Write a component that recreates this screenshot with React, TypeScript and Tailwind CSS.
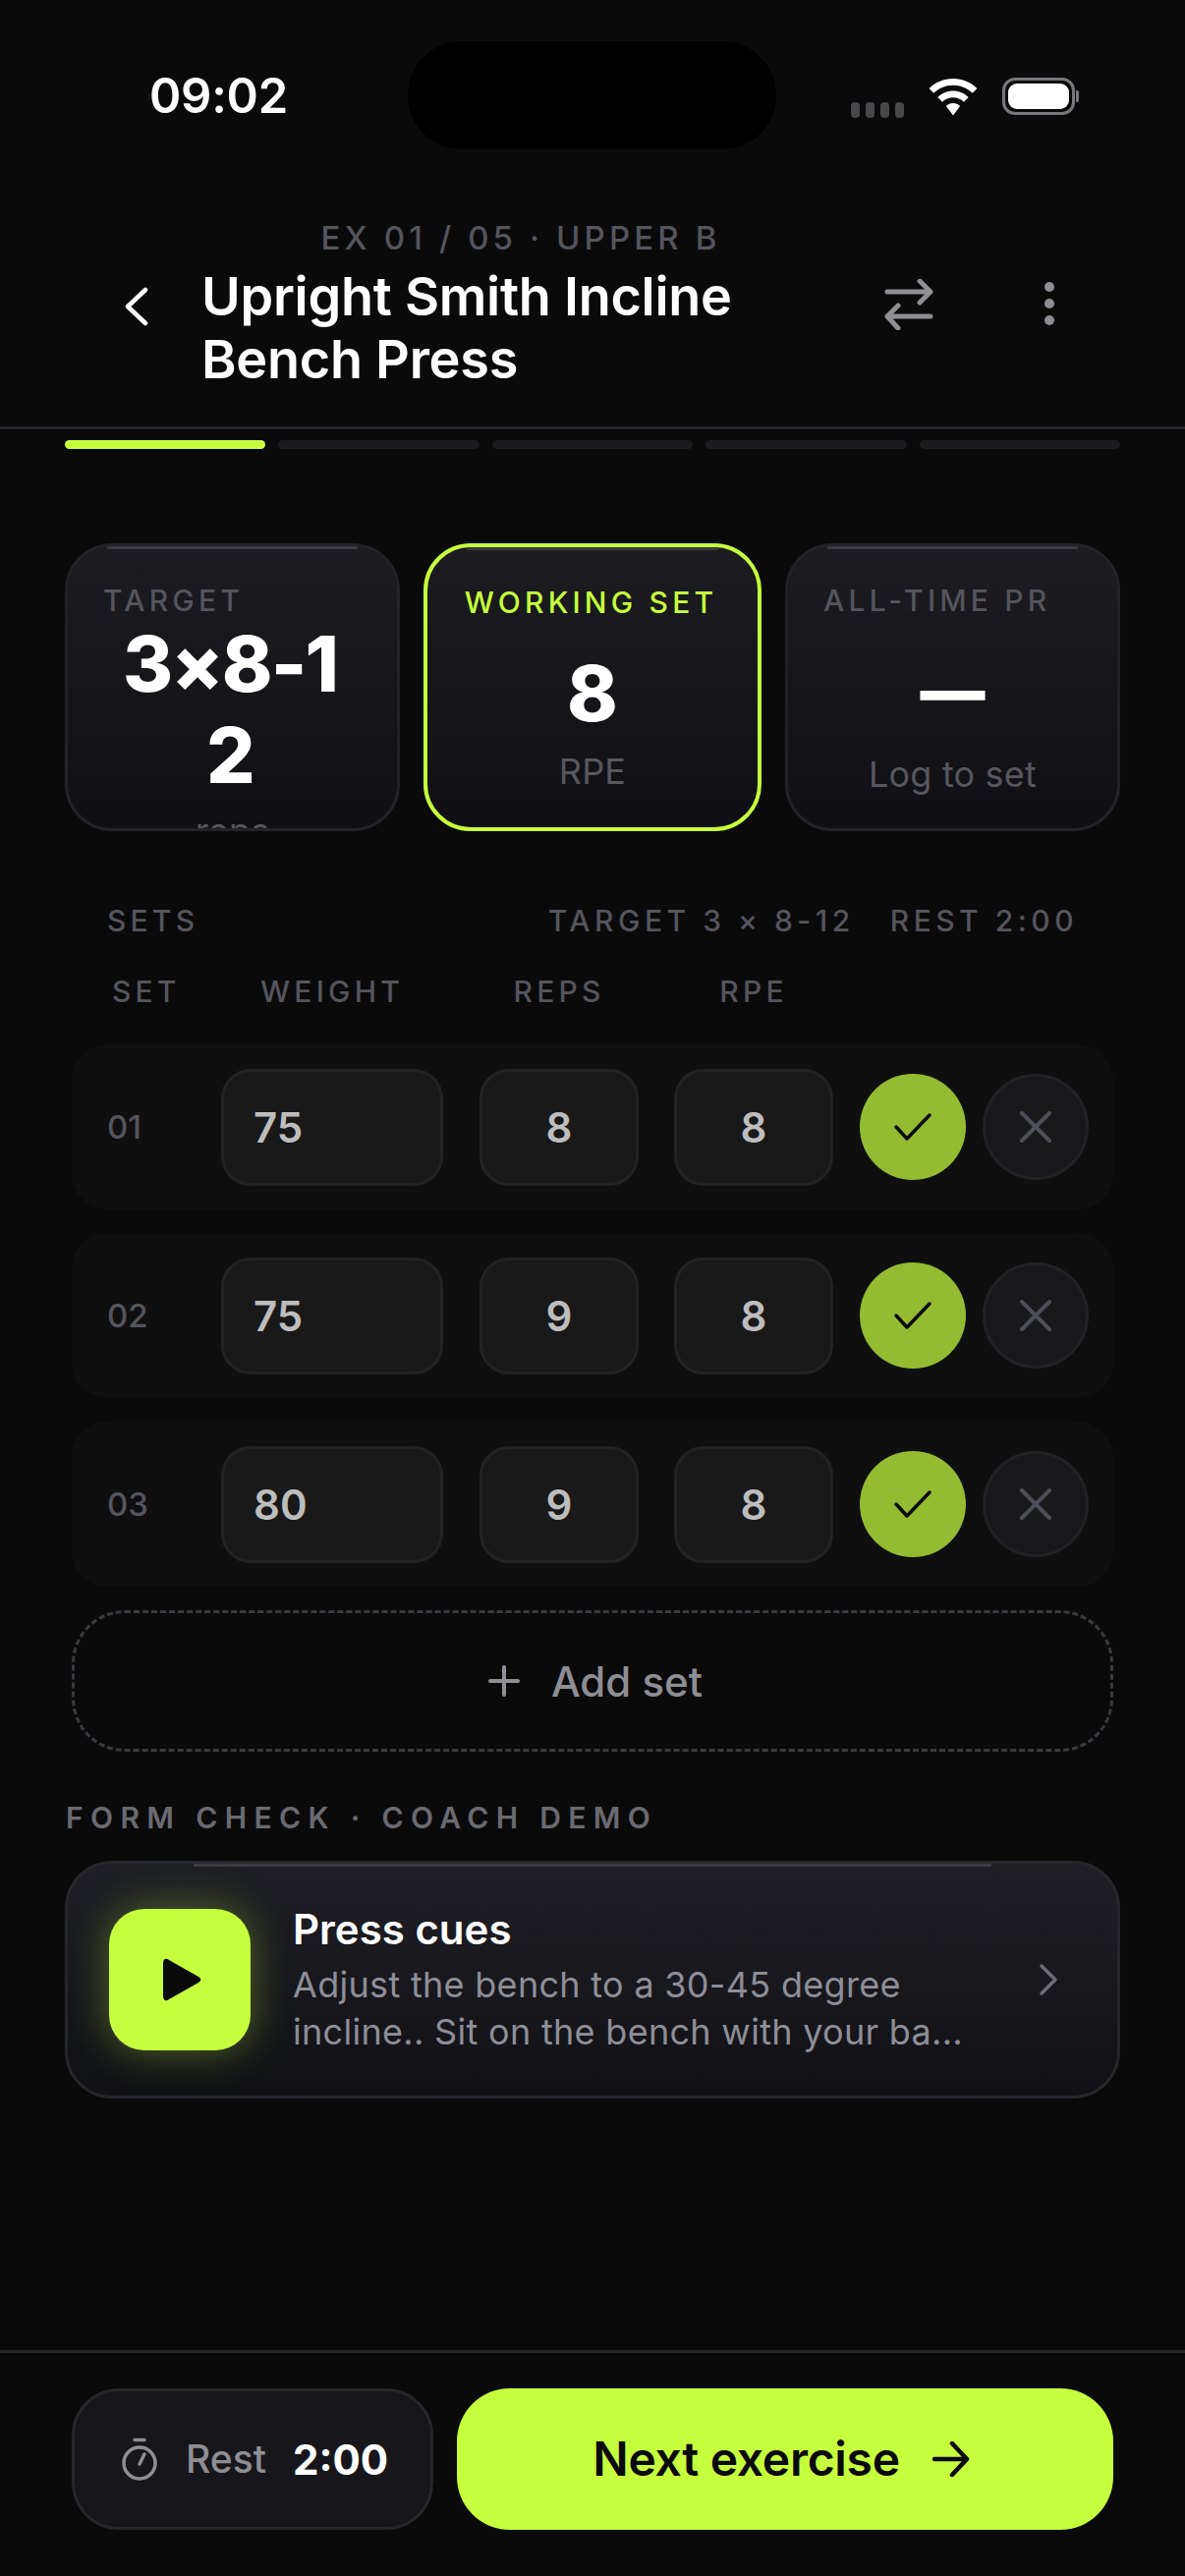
import React from "react";

const FONT = "[font-family:Inter,'Noto_Sans',sans-serif]";

function Highlight({ className }: { className: string }) {
  return <div className={`absolute top-0 h-[3px] bg-[#3b3b41] ${className}`} />;
}

function StatCard({ label, value, sub, active, left, dash }: { label: string; value: string; sub: string; active?: boolean; left?: boolean; dash?: boolean }) {
  return (
    <div className={`relative flex h-[293px] flex-col overflow-hidden rounded-[48px] bg-gradient-to-b from-[#1c1c21] to-[#101014] ${active ? "w-[344px] flex-none border-[4px] border-[#c6ff3d] px-[35px] pt-[30px]" : "flex-1 border-[3px] border-[#222227] px-[36px] pt-[31px]"}`}>
      <Highlight className="left-[40px] right-[40px]" />
      <div className={`text-[30px] leading-[42px] font-medium tracking-[0.14em] whitespace-nowrap ${active ? "mt-[5px] mr-[3px] text-center text-[#c6ff3d]" : "mt-[3px] text-[#55555c]"}`}>{label}</div>
      {left ? (
        <div className="mt-[-3px] pr-[5px] text-center text-[78px] leading-[93px] font-extrabold tracking-[-0.025em] text-white break-all">{value}</div>
      ) : dash ? (
        <div className="mt-[25px] text-center text-[66px] leading-[93px] font-black text-white">{value}</div>
      ) : (
        <div className="mt-[25px] text-center text-[78px] leading-[93px] font-extrabold text-white">{value}</div>
      )}
      <div className={`text-center text-[36px] leading-[48px] tracking-[0.005em] text-[#57575e] ${left ? "mt-[7px]" : dash ? "mt-[14px]" : "mt-[9px]"}`}>{sub}</div>
    </div>
  );
}

function Field({ value, wide }: { value: string; wide?: boolean }) {
  return (
    <div className={`flex h-[119px] items-center rounded-[30px] border-[3px] border-[#232325] bg-[#19191a] text-[42px] font-semibold text-[#bdbdbd] ${wide ? "w-[226px] pl-[30px]" : "w-[162px] justify-center"}`}>{value}</div>
  );
}

function Row({ n, w, r }: { n: string; w: string; r: string }) {
  return (
    <div className="flex h-[168px] items-center rounded-[36px] bg-[#0f0f10] pl-[36px]">
      <div className="mt-[2px] w-[116px] text-[33px] font-medium text-[#55555c]">{n}</div>
      <Field value={w} wide />
      <div className="w-[37px]" />
      <Field value={r} />
      <div className="w-[36px]" />
      <Field value="8" />
      <div className="ml-[27px] flex h-[108px] w-[108px] items-center justify-center rounded-full bg-[#94bc32]">
        <svg width="38" height="28" viewBox="0 0 38 28" fill="none" stroke="#0a0a0b" strokeWidth="3.500" strokeLinecap="round" strokeLinejoin="round"><path d="M2 14 L13 26 L36 2" /></svg>
      </div>
      <div className="ml-[17px] flex h-[108px] w-[108px] items-center justify-center rounded-full border-[3px] border-[#222225] bg-[#19191b]">
        <svg width="32" height="32" viewBox="0 0 32 32" fill="none" stroke="#4f4f57" strokeWidth="4" strokeLinecap="round"><path d="M2 2 L30 30 M30 2 L2 30" /></svg>
      </div>
    </div>
  );
}

function ColHead({ children, className }: { children: string; className: string }) {
  return <div className={`text-[30px] leading-[42px] font-medium tracking-[0.14em] text-[#55555c] ${className}`}>{children}</div>;
}

export default function App() {
  return (
    <div className={`flex h-[2622px] w-[1206px] flex-col overflow-hidden bg-[#0a0a0b] ${FONT}`}>
      {/* status bar */}
      <div className="flex h-[194px] items-start pt-[42px]">
        <div className="ml-[152px] w-[263px] pt-[26px] text-[49px] leading-[60px] font-semibold tracking-[-0.005em] text-white">09:02</div>
        <div className="h-[110px] w-[375px] rounded-[55px] bg-black" />
        <div className="ml-[76px] flex items-center pt-[34px]">
          <div className="mt-[28px] flex gap-[6px]">
            {[0, 1, 2, 3].map((i) => <div key={i} className="h-[16px] w-[9px] rounded-[4px] bg-[#48484a]" />)}
          </div>
          <svg className="ml-[25px] mt-[1px]" width="50" height="38" viewBox="0 0 50 38" fill="white">
            <path d="M25 0C15.5 0 7 3.8 .6 10l4.6 4.8C10.400 9.800 17.400 6.800 25 6.800s14.600 3 19.800 8L49.400 10C43 3.800 34.500 0 25 0z" />
            <path d="M25 12.500c-6 0-11.500 2.400-15.600 6.400l4.600 4.800c2.900-2.800 6.800-4.500 11-4.500s8.100 1.700 11 4.500l4.600-4.800c-4.100-4-9.600-6.400-15.600-6.400z" />
            <path d="M25 25c-2.800 0-5.300 1.100-7.100 2.900L25 37.500l7.100-9.600C30.300 26.100 27.800 25 25 25z" />
          </svg>
          <div className="ml-[25px] flex items-center">
            <div className="flex h-[38px] w-[74px] items-center justify-center rounded-[13px] border-[3px] border-[#77777c] p-[3px]">
              <div className="h-full w-full rounded-[9px] bg-white" />
            </div>
            <div className="ml-[1px] h-[12px] w-[3px] rounded-r-[2px] bg-[#77777c]" />
          </div>
        </div>
      </div>

      {/* header */}
      <div className="flex h-[243px] items-start border-b-[3px] border-[#26262b] pt-[26px]">
        <div className="ml-[127px] mt-[72px] w-[78px]">
          <svg width="24" height="40" viewBox="0 0 24 40" fill="none" stroke="white" strokeWidth="4.500" strokeLinecap="round" strokeLinejoin="round"><path d="M21 3 L3 20 L21 37" /></svg>
        </div>
        <div className="w-[650px]">
          <div className="text-center text-[33px] leading-[44px] font-medium tracking-[0.125em] text-[#55555c]">EX 01 / 05 · UPPER B</div>
          <div className="mt-[6px] text-[54px] leading-[64px] font-semibold tracking-[-0.005em] text-white">Upright Smith Incline Bench Press</div>
        </div>
        <svg className="ml-[45px] mt-[64px]" width="50" height="52" viewBox="0 0 50 52" fill="none" stroke="#8e8e93" strokeWidth="5" strokeLinecap="round" strokeLinejoin="round"><path d="M3 13 H47 M36 2 L47 13 L36 24 M47 38 H3 M14 27 L3 38 L14 50" /></svg>
        <div className="ml-[113px] mt-[67px] flex flex-col gap-[7px]">
          {[0, 1, 2].map((i) => <div key={i} className="h-[10px] w-[10px] rounded-full bg-[#8e8e93]" />)}
        </div>
      </div>

      {/* progress */}
      <div className="mx-[66px] mt-[11px] flex gap-[13px]">
        <div className="h-[9px] flex-1 rounded-full bg-[#c6ff3d]" />
        {[0, 1, 2, 3].map((i) => <div key={i} className="h-[9px] flex-1 rounded-full bg-[#1c1c1e]" />)}
      </div>

      {/* stats */}
      <div className="mx-[66px] mt-[96px] flex gap-[24px]">
        <StatCard label="TARGET" value="3×8-12" sub="reps" left />
        <StatCard label="WORKING SET" value="8" sub="RPE" active />
        <StatCard label="ALL-TIME PR" value="—" sub="Log to set" dash />
      </div>

      {/* sets header */}
      <div className="mx-[109px] mt-[70px] flex justify-between">
        <ColHead className="">SETS</ColHead>
        <div className="flex gap-[36px]">
          <ColHead className="tracking-[0.15em]">TARGET 3 × 8-12</ColHead>
          <ColHead className="tracking-[0.15em]">REST 2:00</ColHead>
        </div>
      </div>
      <div className="ml-[73px] mt-[30px] flex">
        <ColHead className="w-[152px] pl-[41px]">SET</ColHead>
        <ColHead className="w-[226px] text-center">WEIGHT</ColHead>
        <div className="w-[37px]" />
        <ColHead className="w-[162px] text-center">REPS</ColHead>
        <div className="w-[36px]" />
        <ColHead className="w-[162px] text-center">RPE</ColHead>
      </div>

      {/* rows */}
      <div className="mx-[73px] mt-[33px] flex flex-col gap-[24px]">
        <Row n="01" w="75" r="8" />
        <Row n="02" w="75" r="9" />
        <Row n="03" w="80" r="9" />
        <div className="flex h-[144px] items-center justify-center gap-[32px] rounded-[54px] border-[3px] border-dashed border-[#3a3a3e] pl-[6px] text-[42px] font-medium text-[#8e8e93]">
          <svg width="32" height="32" viewBox="0 0 32 32" fill="none" stroke="#8e8e93" strokeWidth="4" strokeLinecap="round"><path d="M16 2 V30 M2 16 H30" /></svg>
          <span>Add set</span>
        </div>
      </div>

      {/* form check */}
      <div className="ml-[67px] mt-[46px] text-[30px] leading-[42px] font-semibold tracking-[0.245em] text-[#6a6a70]">FORM CHECK · COACH DEMO</div>
      <div className="relative mx-[66px] mt-[23px] flex h-[242px] items-center overflow-hidden rounded-[48px] border-[3px] border-[#26262b] bg-gradient-to-b from-[#1f1f25] to-[#111115] pl-[42px]">
        <Highlight className="left-[128px] right-[128px]" />
        <div className="flex h-[144px] w-[144px] items-center justify-center rounded-[36px] bg-[#c6ff3d] shadow-[0_0_42px_rgba(198,255,61,0.35)]">
          <svg className="ml-[3px]" width="42" height="44" viewBox="0 0 42 44" fill="#0a0a0b"><path d="M2 5C2 1 5-.5 8 2L38 19c3 1.700 3 4.300 0 6L8 42c-3 2.500-6 1-6-3z" /></svg>
        </div>
        <div className="ml-[43px] w-[715px]">
          <div className="text-[42px] leading-[52px] font-semibold text-white">Press cues</div>
          <div className="mt-[6px] text-[36px] leading-[48px] tracking-[0.3px] text-[#8e8e96]">Adjust the bench to a 30-45 degree<br />incline.. Sit on the bench with your ba...</div>
        </div>
        <svg className="ml-[44px]" width="20" height="34" viewBox="0 0 20 34" fill="none" stroke="#6e6e76" strokeWidth="3.500" strokeLinecap="round" strokeLinejoin="round"><path d="M3 3 L17 17 L3 31" /></svg>
      </div>

      <div className="flex-1" />

      {/* bottom bar */}
      <div className="flex h-[230px] gap-[24px] border-t-[3px] border-[#26262b] px-[73px] pt-[36px]">
        <div className="flex h-[144px] w-[368px] items-center rounded-[48px] border-[3px] border-[#26262b] bg-[#17171b] pl-[47px]">
          <svg width="38" height="44" viewBox="0 0 38 44" fill="none" stroke="#8e8e93" strokeWidth="3.500" strokeLinecap="round"><circle cx="19" cy="26" r="16" /><path d="M14 2.500 H24 M19 27 L24 17" /></svg>
          <span className="ml-[28px] text-[39px] font-medium text-[#8e8e93]">Rest</span>
          <span className="ml-[27px] text-[42px] font-bold text-white">2:00</span>
        </div>
        <div className="flex h-[144px] flex-1 items-center justify-center gap-[33px] rounded-[54px] bg-[#c6ff3d] pr-[8px] text-[48px] font-semibold tracking-[-0.006em] text-[#0a0a0b]">
          <span>Next exercise</span>
          <svg width="38" height="36" viewBox="0 0 38 36" fill="none" stroke="#0a0a0b" strokeWidth="4.500" strokeLinecap="round" strokeLinejoin="round"><path d="M2 18 H35 M20 2 L35 18 L20 34" /></svg>
        </div>
      </div>
    </div>
  );
}
